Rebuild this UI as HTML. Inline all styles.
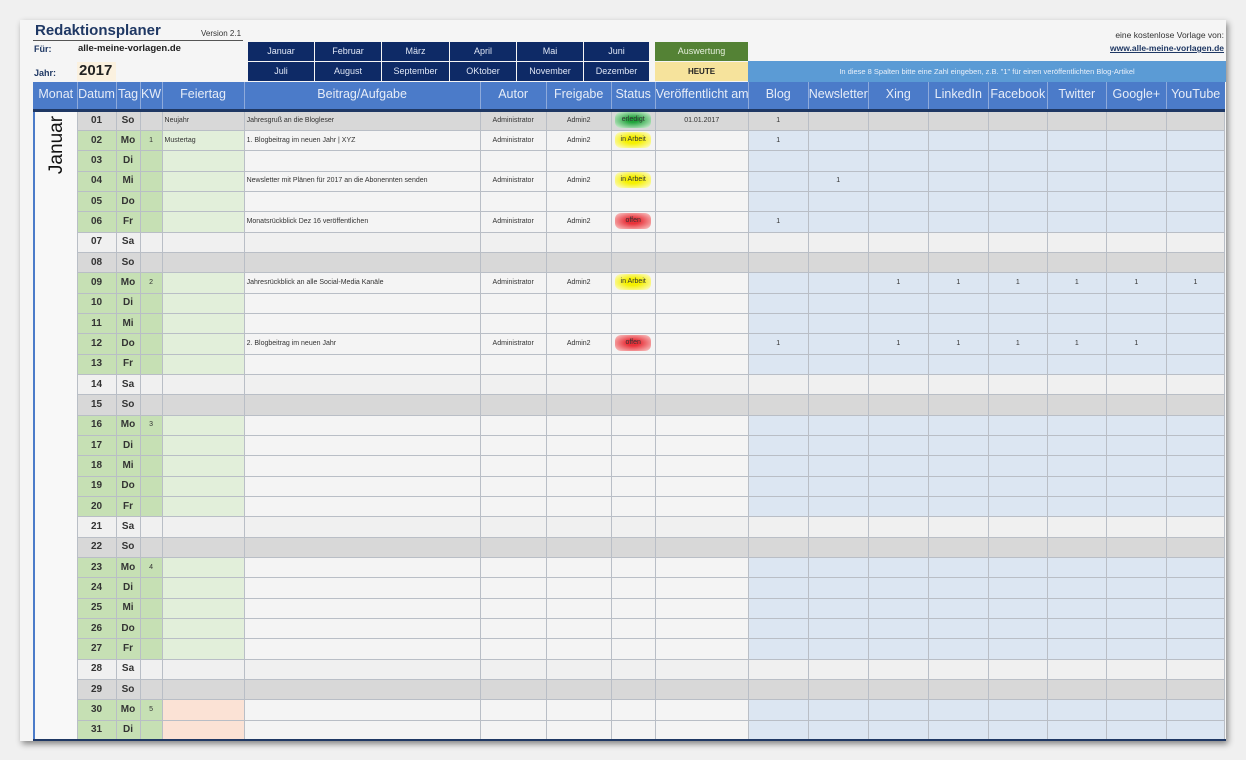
<!DOCTYPE html>
<html><head><meta charset="utf-8"><style>
*{margin:0;padding:0;box-sizing:border-box}
body{width:1246px;height:760px;background:#f0f0f0;font-family:"Liberation Sans",sans-serif;position:relative;overflow:hidden}
.panel{position:absolute;left:20px;top:20px;width:1206px;height:721px;background:#f5f5f5;box-shadow:2px 3px 6px rgba(0,0,0,.45)}
.abs{position:absolute}
.mb{position:absolute;background:#0e2a66;color:#dfe6f5;font-size:9px;text-align:center;line-height:19px;height:19px}
table{position:absolute;left:33px;top:82px;border-collapse:collapse;table-layout:fixed;width:1192px}
th{background:#4b7bc9;color:#e6ecf7;font-weight:normal;font-size:12.5px;height:28px;line-height:24px;vertical-align:top;border-left:1px solid #8eaadb;border-bottom:3px solid #1f3864;padding:0;white-space:nowrap;overflow:hidden}
td{height:20.35px;line-height:18px;vertical-align:middle;font-size:7px;color:#333;border:1px solid #b9bec6;padding:0 2px;white-space:nowrap;overflow:hidden;text-align:center;background:#f4f4f4}
td.d,td.t{font-size:10px;font-weight:bold;color:#333}
td.l{text-align:left}
tr.w td.d,tr.w td.t,tr.w td.k{background:#c6e0b4}
tr.w td.f{background:#e2efda}
tr.w td.s{background:#dce6f2}
tr.a td{background:#f0f0f0}
tr.o td{background:#d8d8d8}
td.m{background:#f8f8f8!important;border-left:2px solid #4b7bc9;vertical-align:top;border-bottom:none}
.st{display:inline-block;width:36px;height:16px;line-height:16px;border-radius:6px;vertical-align:middle}
.g{background:radial-gradient(ellipse,#1fa33a 20%,#bde6c4 85%,transparent)}
.y{background:radial-gradient(ellipse,#f5f000 30%,#fbf9a0 80%,transparent)}
.r{background:radial-gradient(ellipse,#e8323a 25%,#f6b3b3 85%,transparent)}
tr.p td.f{background:#fbe2d5}
</style></head><body>
<div class="panel"></div>
<div class="abs" style="left:35px;top:22px;font-size:15px;font-weight:bold;color:#1f3864">Redaktionsplaner</div>
<div class="abs" style="left:201px;top:29px;font-size:8px;color:#333">Version 2.1</div>
<div class="abs" style="left:33px;top:40px;width:210px;height:1px;background:#555"></div>
<div class="abs" style="left:34px;top:44px;font-size:9px;font-weight:bold;color:#1f3864">Für:</div>
<div class="abs" style="left:78px;top:43px;font-size:9.5px;font-weight:bold;color:#222">alle-meine-vorlagen.de</div>
<div class="abs" style="left:34px;top:68px;font-size:9px;font-weight:bold;color:#1f3864">Jahr:</div>
<div class="abs" style="left:77px;top:62px;width:39px;height:19px;background:#fbf1df"></div>
<div class="abs" style="left:79px;top:62px;font-size:15px;font-weight:bold;color:#222">2017</div>
<div class="mb" style="left:248px;top:42px;width:66px">Januar</div>
<div class="mb" style="left:315px;top:42px;width:66px">Februar</div>
<div class="mb" style="left:382px;top:42px;width:67px">März</div>
<div class="mb" style="left:450px;top:42px;width:66px">April</div>
<div class="mb" style="left:517px;top:42px;width:66px">Mai</div>
<div class="mb" style="left:584px;top:42px;width:65px">Juni</div>
<div class="mb" style="left:248px;top:62px;width:66px">Juli</div>
<div class="mb" style="left:315px;top:62px;width:66px">August</div>
<div class="mb" style="left:382px;top:62px;width:67px">September</div>
<div class="mb" style="left:450px;top:62px;width:66px">OKtober</div>
<div class="mb" style="left:517px;top:62px;width:66px">November</div>
<div class="mb" style="left:584px;top:62px;width:65px">Dezember</div>
<div class="mb" style="left:655px;top:42px;width:93px;background:#548235;color:#e5efdc">Auswertung</div>
<div class="mb" style="left:655px;top:62px;width:93px;background:#f6e39c;color:#222;font-weight:bold;font-size:8px">HEUTE</div>
<div class="abs" style="left:748px;top:61px;width:478px;height:21px;background:#5b9bd5;color:#e8f0fa;font-size:7.5px;text-align:center;line-height:21px">In diese 8 Spalten bitte eine Zahl eingeben, z.B. "1" für einen veröffentlichten Blog-Artikel</div>
<div class="abs" style="right:22px;top:30px;font-size:8.5px;color:#333">eine kostenlose Vorlage von:</div>
<div class="abs" style="right:22px;top:43px;font-size:8.5px;color:#1f3864;text-decoration:underline;font-weight:bold">www.alle-meine-vorlagen.de</div>
<table>
<colgroup><col style="width:43px"><col style="width:39px"><col style="width:24px"><col style="width:22px"><col style="width:82px"><col style="width:236px"><col style="width:66px"><col style="width:65px"><col style="width:44px"><col style="width:93px"><col style="width:60px"><col style="width:60px"><col style="width:60px"><col style="width:60px"><col style="width:59px"><col style="width:59px"><col style="width:60px"><col style="width:58px"></colgroup>
<tr><th style="border-left:2px solid #4b7bc9">Monat</th><th>Datum</th><th>Tag</th><th>KW</th><th>Feiertag</th><th>Beitrag/Aufgabe</th><th>Autor</th><th>Freigabe</th><th>Status</th><th>Veröffentlicht am</th><th>Blog</th><th>Newsletter</th><th>Xing</th><th>LinkedIn</th><th>Facebook</th><th>Twitter</th><th>Google+</th><th>YouTube</th></tr>
<tr class="o"><td class="m" rowspan="31"><div style="transform:rotate(-90deg);transform-origin:center;font-size:19px;color:#111;width:60px;margin:22px 0 0 -10px;text-align:center;line-height:22px">Januar</div></td><td class="d">01</td><td class="t">So</td><td class="k"></td><td class="f l">Neujahr</td><td class="l">Jahresgruß an die Blogleser</td><td>Administrator</td><td>Admin2</td><td><span class="st g">erledigt</span></td><td>01.01.2017</td><td class="s">1</td><td class="s"></td><td class="s"></td><td class="s"></td><td class="s"></td><td class="s"></td><td class="s"></td><td class="s"></td></tr>
<tr class="w"><td class="d">02</td><td class="t">Mo</td><td class="k">1</td><td class="f l">Mustertag</td><td class="l">1. Blogbeitrag im neuen Jahr | XYZ</td><td>Administrator</td><td>Admin2</td><td><span class="st y">in Arbeit</span></td><td></td><td class="s">1</td><td class="s"></td><td class="s"></td><td class="s"></td><td class="s"></td><td class="s"></td><td class="s"></td><td class="s"></td></tr>
<tr class="w"><td class="d">03</td><td class="t">Di</td><td class="k"></td><td class="f"></td><td></td><td></td><td></td><td></td><td></td><td class="s"></td><td class="s"></td><td class="s"></td><td class="s"></td><td class="s"></td><td class="s"></td><td class="s"></td><td class="s"></td></tr>
<tr class="w"><td class="d">04</td><td class="t">Mi</td><td class="k"></td><td class="f"></td><td class="l">Newsletter mit Plänen für 2017 an die Abonennten senden</td><td>Administrator</td><td>Admin2</td><td><span class="st y">in Arbeit</span></td><td></td><td class="s"></td><td class="s">1</td><td class="s"></td><td class="s"></td><td class="s"></td><td class="s"></td><td class="s"></td><td class="s"></td></tr>
<tr class="w"><td class="d">05</td><td class="t">Do</td><td class="k"></td><td class="f"></td><td></td><td></td><td></td><td></td><td></td><td class="s"></td><td class="s"></td><td class="s"></td><td class="s"></td><td class="s"></td><td class="s"></td><td class="s"></td><td class="s"></td></tr>
<tr class="w"><td class="d">06</td><td class="t">Fr</td><td class="k"></td><td class="f"></td><td class="l">Monatsrückblick Dez 16 veröffentlichen</td><td>Administrator</td><td>Admin2</td><td><span class="st r">offen</span></td><td></td><td class="s">1</td><td class="s"></td><td class="s"></td><td class="s"></td><td class="s"></td><td class="s"></td><td class="s"></td><td class="s"></td></tr>
<tr class="a"><td class="d">07</td><td class="t">Sa</td><td></td><td></td><td></td><td></td><td></td><td></td><td></td><td></td><td></td><td></td><td></td><td></td><td></td><td></td><td></td></tr>
<tr class="o"><td class="d">08</td><td class="t">So</td><td></td><td></td><td></td><td></td><td></td><td></td><td></td><td></td><td></td><td></td><td></td><td></td><td></td><td></td><td></td></tr>
<tr class="w"><td class="d">09</td><td class="t">Mo</td><td class="k">2</td><td class="f"></td><td class="l">Jahresrückblick an alle Social-Media Kanäle</td><td>Administrator</td><td>Admin2</td><td><span class="st y">in Arbeit</span></td><td></td><td class="s"></td><td class="s"></td><td class="s">1</td><td class="s">1</td><td class="s">1</td><td class="s">1</td><td class="s">1</td><td class="s">1</td></tr>
<tr class="w"><td class="d">10</td><td class="t">Di</td><td class="k"></td><td class="f"></td><td></td><td></td><td></td><td></td><td></td><td class="s"></td><td class="s"></td><td class="s"></td><td class="s"></td><td class="s"></td><td class="s"></td><td class="s"></td><td class="s"></td></tr>
<tr class="w"><td class="d">11</td><td class="t">Mi</td><td class="k"></td><td class="f"></td><td></td><td></td><td></td><td></td><td></td><td class="s"></td><td class="s"></td><td class="s"></td><td class="s"></td><td class="s"></td><td class="s"></td><td class="s"></td><td class="s"></td></tr>
<tr class="w"><td class="d">12</td><td class="t">Do</td><td class="k"></td><td class="f"></td><td class="l">2. Blogbeitrag im neuen Jahr</td><td>Administrator</td><td>Admin2</td><td><span class="st r">offen</span></td><td></td><td class="s">1</td><td class="s"></td><td class="s">1</td><td class="s">1</td><td class="s">1</td><td class="s">1</td><td class="s">1</td><td class="s"></td></tr>
<tr class="w"><td class="d">13</td><td class="t">Fr</td><td class="k"></td><td class="f"></td><td></td><td></td><td></td><td></td><td></td><td class="s"></td><td class="s"></td><td class="s"></td><td class="s"></td><td class="s"></td><td class="s"></td><td class="s"></td><td class="s"></td></tr>
<tr class="a"><td class="d">14</td><td class="t">Sa</td><td></td><td></td><td></td><td></td><td></td><td></td><td></td><td></td><td></td><td></td><td></td><td></td><td></td><td></td><td></td></tr>
<tr class="o"><td class="d">15</td><td class="t">So</td><td></td><td></td><td></td><td></td><td></td><td></td><td></td><td></td><td></td><td></td><td></td><td></td><td></td><td></td><td></td></tr>
<tr class="w"><td class="d">16</td><td class="t">Mo</td><td class="k">3</td><td class="f"></td><td></td><td></td><td></td><td></td><td></td><td class="s"></td><td class="s"></td><td class="s"></td><td class="s"></td><td class="s"></td><td class="s"></td><td class="s"></td><td class="s"></td></tr>
<tr class="w"><td class="d">17</td><td class="t">Di</td><td class="k"></td><td class="f"></td><td></td><td></td><td></td><td></td><td></td><td class="s"></td><td class="s"></td><td class="s"></td><td class="s"></td><td class="s"></td><td class="s"></td><td class="s"></td><td class="s"></td></tr>
<tr class="w"><td class="d">18</td><td class="t">Mi</td><td class="k"></td><td class="f"></td><td></td><td></td><td></td><td></td><td></td><td class="s"></td><td class="s"></td><td class="s"></td><td class="s"></td><td class="s"></td><td class="s"></td><td class="s"></td><td class="s"></td></tr>
<tr class="w"><td class="d">19</td><td class="t">Do</td><td class="k"></td><td class="f"></td><td></td><td></td><td></td><td></td><td></td><td class="s"></td><td class="s"></td><td class="s"></td><td class="s"></td><td class="s"></td><td class="s"></td><td class="s"></td><td class="s"></td></tr>
<tr class="w"><td class="d">20</td><td class="t">Fr</td><td class="k"></td><td class="f"></td><td></td><td></td><td></td><td></td><td></td><td class="s"></td><td class="s"></td><td class="s"></td><td class="s"></td><td class="s"></td><td class="s"></td><td class="s"></td><td class="s"></td></tr>
<tr class="a"><td class="d">21</td><td class="t">Sa</td><td></td><td></td><td></td><td></td><td></td><td></td><td></td><td></td><td></td><td></td><td></td><td></td><td></td><td></td><td></td></tr>
<tr class="o"><td class="d">22</td><td class="t">So</td><td></td><td></td><td></td><td></td><td></td><td></td><td></td><td></td><td></td><td></td><td></td><td></td><td></td><td></td><td></td></tr>
<tr class="w"><td class="d">23</td><td class="t">Mo</td><td class="k">4</td><td class="f"></td><td></td><td></td><td></td><td></td><td></td><td class="s"></td><td class="s"></td><td class="s"></td><td class="s"></td><td class="s"></td><td class="s"></td><td class="s"></td><td class="s"></td></tr>
<tr class="w"><td class="d">24</td><td class="t">Di</td><td class="k"></td><td class="f"></td><td></td><td></td><td></td><td></td><td></td><td class="s"></td><td class="s"></td><td class="s"></td><td class="s"></td><td class="s"></td><td class="s"></td><td class="s"></td><td class="s"></td></tr>
<tr class="w"><td class="d">25</td><td class="t">Mi</td><td class="k"></td><td class="f"></td><td></td><td></td><td></td><td></td><td></td><td class="s"></td><td class="s"></td><td class="s"></td><td class="s"></td><td class="s"></td><td class="s"></td><td class="s"></td><td class="s"></td></tr>
<tr class="w"><td class="d">26</td><td class="t">Do</td><td class="k"></td><td class="f"></td><td></td><td></td><td></td><td></td><td></td><td class="s"></td><td class="s"></td><td class="s"></td><td class="s"></td><td class="s"></td><td class="s"></td><td class="s"></td><td class="s"></td></tr>
<tr class="w"><td class="d">27</td><td class="t">Fr</td><td class="k"></td><td class="f"></td><td></td><td></td><td></td><td></td><td></td><td class="s"></td><td class="s"></td><td class="s"></td><td class="s"></td><td class="s"></td><td class="s"></td><td class="s"></td><td class="s"></td></tr>
<tr class="a"><td class="d">28</td><td class="t">Sa</td><td></td><td></td><td></td><td></td><td></td><td></td><td></td><td></td><td></td><td></td><td></td><td></td><td></td><td></td><td></td></tr>
<tr class="o"><td class="d">29</td><td class="t">So</td><td></td><td></td><td></td><td></td><td></td><td></td><td></td><td></td><td></td><td></td><td></td><td></td><td></td><td></td><td></td></tr>
<tr class="w p"><td class="d">30</td><td class="t">Mo</td><td class="k">5</td><td class="f"></td><td></td><td></td><td></td><td></td><td></td><td class="s"></td><td class="s"></td><td class="s"></td><td class="s"></td><td class="s"></td><td class="s"></td><td class="s"></td><td class="s"></td></tr>
<tr class="w p"><td class="d">31</td><td class="t">Di</td><td class="k"></td><td class="f"></td><td></td><td></td><td></td><td></td><td></td><td class="s"></td><td class="s"></td><td class="s"></td><td class="s"></td><td class="s"></td><td class="s"></td><td class="s"></td><td class="s"></td></tr>
</table>
<div class="abs" style="left:33px;top:739px;width:1193px;height:2px;background:#1f3864"></div>
</body></html>
